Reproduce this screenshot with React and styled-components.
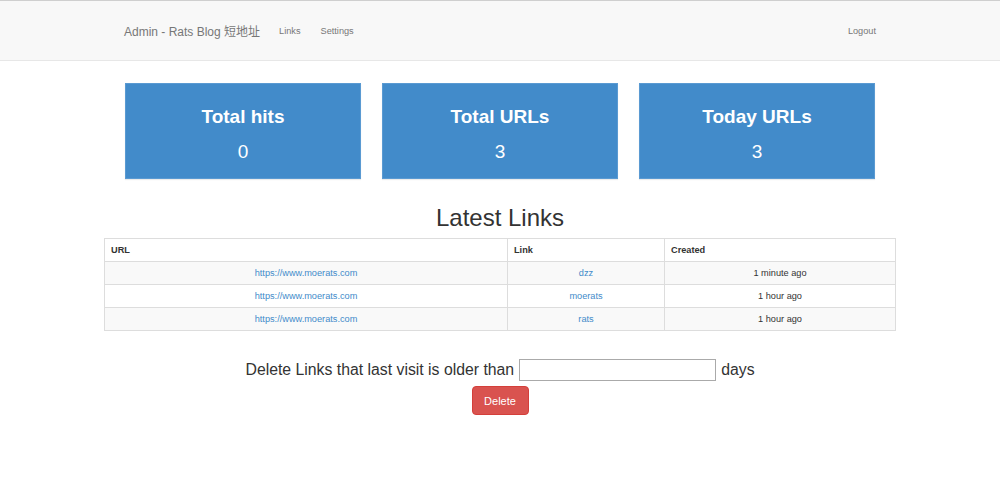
import React from 'react';
import styled, { createGlobalStyle } from 'styled-components';

const GlobalStyle = createGlobalStyle`
  body {
    margin: 0;
    background: #fff;
    color: #333;
    font-family: 'Liberation Sans', Arial, 'Noto Sans CJK SC', sans-serif;
  }
`;

const Navbar = styled.nav`
  background: #f8f8f8;
  border-top: 1px solid #cfcfcf;
  border-bottom: 1px solid #e7e7e7;
`;

const NavInner = styled.div`
  width: 752px;
  height: 59px;
  margin: 0 auto;
  display: flex;
  align-items: center;
`;

const Brand = styled.a`
  font-size: 12px;
  color: #777;
  margin-right: 19px;
  text-decoration: none;
`;

const NavLink = styled.a`
  font-size: 9.2px;
  color: #777;
  text-decoration: none;
  margin-right: ${props => (props.last ? '0' : '20px')};
  margin-left: ${props => (props.right ? 'auto' : '0')};
`;

const Stats = styled.div`
  width: 750px;
  margin: 22px auto 0;
  display: flex;
  gap: 21px;
`;

const StatCard = styled.div`
  flex: 1;
  height: 88px;
  padding-top: 6px;
  background: #428bca;
  border: 1px solid #5a9ad2;
  box-shadow: 0 1px 1px rgba(0, 0, 0, 0.08);
  color: #fff;
  display: flex;
  flex-direction: column;
  align-items: center;
  justify-content: center;
  gap: 13px;
`;

const StatTitle = styled.div`
  font-size: 19px;
  font-weight: bold;
  line-height: 22px;
`;

const StatValue = styled.div`
  font-size: 19px;
  line-height: 22px;
`;

const Heading = styled.h2`
  margin: 25px 0 6px;
  text-align: center;
  font-size: 24px;
  font-weight: normal;
  line-height: 28px;
  color: #333;
`;

const Table = styled.table`
  width: 791px;
  margin: 0 auto;
  table-layout: fixed;
  border-collapse: collapse;
  border: 1px solid #ddd;
  font-size: 9.2px;
`;

const Th = styled.th`
  box-sizing: border-box;
  text-align: left;
  font-weight: bold;
  height: 23px;
  padding: 0 6px;
  border: 1px solid #ddd;
  width: ${props => props.w}px;
`;

const Tr = styled.tr`
  background: ${props => (props.striped ? '#f9f9f9' : '#fff')};
`;

const Td = styled.td`
  box-sizing: border-box;
  text-align: center;
  height: 23px;
  padding: 0 6px;
  border: 1px solid #ddd;
`;

const A = styled.a`
  color: #428bca;
  text-decoration: none;
`;

const DeleteForm = styled.form`
  margin-top: 28px;
  display: flex;
  flex-direction: column;
  align-items: center;
  gap: 5px;
`;

const DeleteLine = styled.div`
  display: flex;
  align-items: center;
  gap: 5px;
  font-size: 15.8px;
  color: #333;
`;

const DaysInput = styled.input`
  width: 193px;
  height: 18px;
  border: 1px solid #aaa;
  padding: 1px;
  margin: 0;
`;

const DeleteButton = styled.button`
  width: 57px;
  height: 29px;
  background: #d9534f;
  border: 1px solid #d43f3a;
  border-radius: 4px;
  color: #fff;
  font-size: 11px;
  font-family: 'Liberation Sans', Arial, sans-serif;
  padding: 0;
`;

const links = [
  { url: 'https://www.moerats.com', link: 'dzz', created: '1 minute ago' },
  { url: 'https://www.moerats.com', link: 'moerats', created: '1 hour ago' },
  { url: 'https://www.moerats.com', link: 'rats', created: '1 hour ago' },
];

export default function App() {
  return (
    <>
      <GlobalStyle />
      <Navbar>
        <NavInner>
          <Brand>Admin - Rats Blog 短地址</Brand>
          <NavLink>Links</NavLink>
          <NavLink last>Settings</NavLink>
          <NavLink right last>Logout</NavLink>
        </NavInner>
      </Navbar>

      <Stats>
        <StatCard>
          <StatTitle>Total hits</StatTitle>
          <StatValue>0</StatValue>
        </StatCard>
        <StatCard>
          <StatTitle>Total URLs</StatTitle>
          <StatValue>3</StatValue>
        </StatCard>
        <StatCard>
          <StatTitle>Today URLs</StatTitle>
          <StatValue>3</StatValue>
        </StatCard>
      </Stats>

      <Heading>Latest Links</Heading>
      <Table>
        <thead>
          <tr>
            <Th w={403}>URL</Th>
            <Th w={157}>Link</Th>
            <Th w={231}>Created</Th>
          </tr>
        </thead>
        <tbody>
          {links.map((row, i) => (
            <Tr key={i} striped={i % 2 === 0}>
              <Td><A href="#">{row.url}</A></Td>
              <Td><A href="#">{row.link}</A></Td>
              <Td>{row.created}</Td>
            </Tr>
          ))}
        </tbody>
      </Table>

      <DeleteForm onSubmit={e => e.preventDefault()}>
        <DeleteLine>
          Delete Links that last visit is older than
          <DaysInput type="text" />
          days
        </DeleteLine>
        <DeleteButton type="submit">Delete</DeleteButton>
      </DeleteForm>
    </>
  );
}
